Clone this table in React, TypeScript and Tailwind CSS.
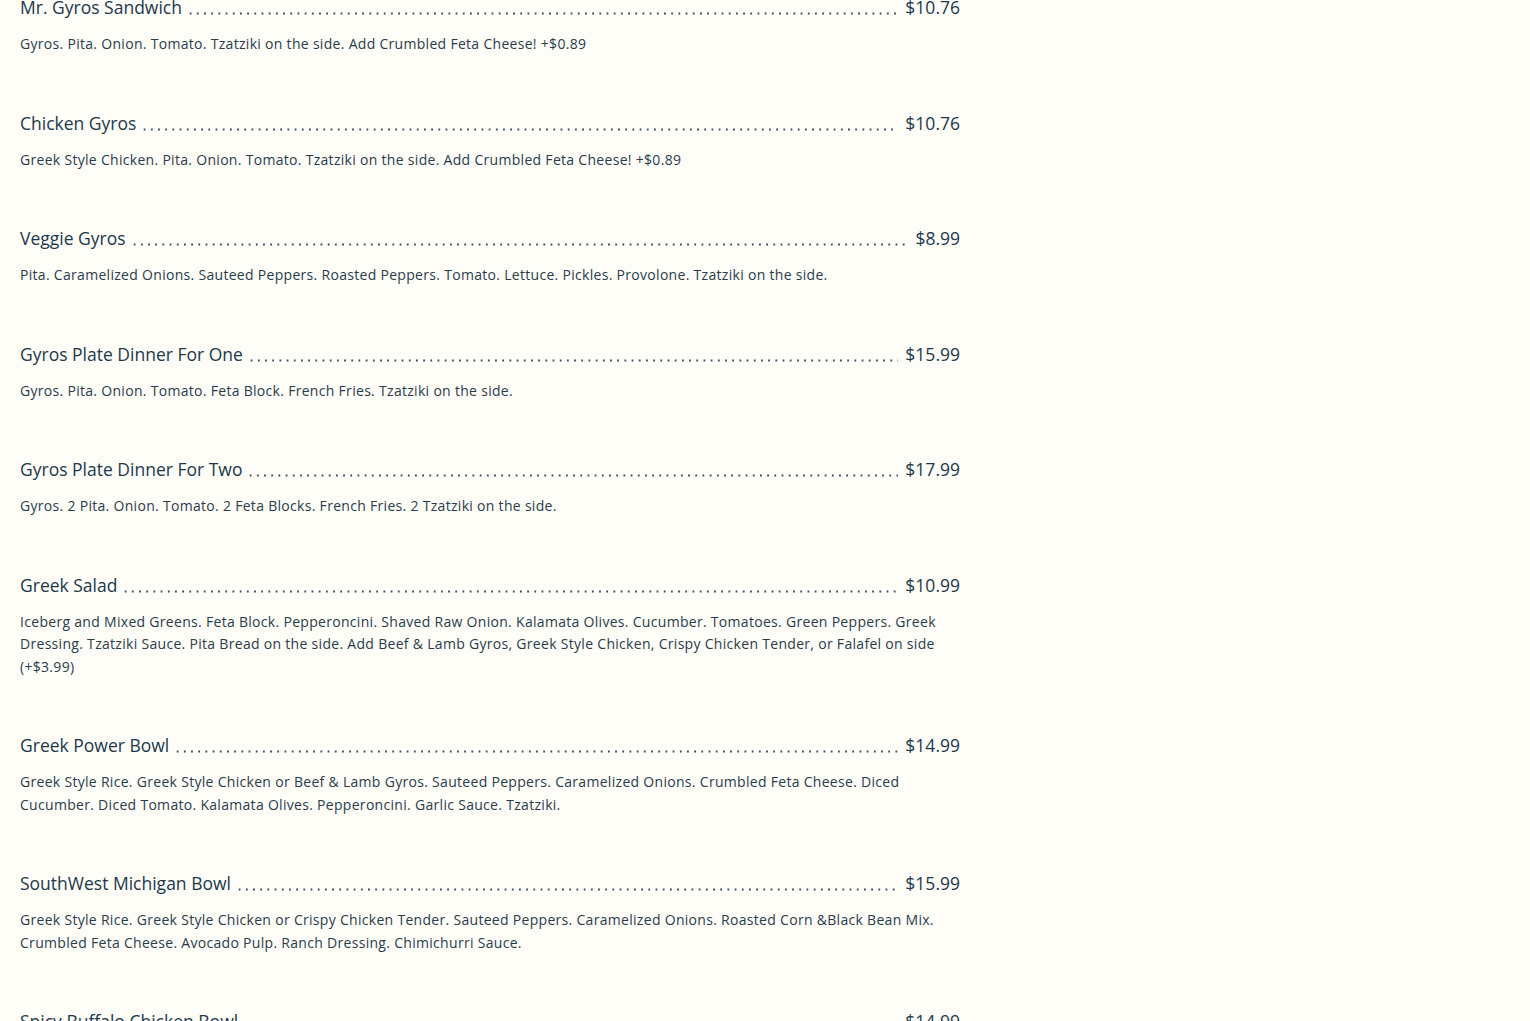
import React from "react";

type Item = { name: string; price: string; desc: string };

const items: Item[] = [
  {
    name: "Mr. Gyros Sandwich",
    price: "$10.76",
    desc: "Gyros. Pita. Onion. Tomato. Tzatziki on the side. Add Crumbled Feta Cheese! +$0.89",
  },
  {
    name: "Chicken Gyros",
    price: "$10.76",
    desc: "Greek Style Chicken. Pita. Onion. Tomato. Tzatziki on the side. Add Crumbled Feta Cheese! +$0.89",
  },
  {
    name: "Veggie Gyros",
    price: "$8.99",
    desc: "Pita. Caramelized Onions. Sauteed Peppers. Roasted Peppers. Tomato. Lettuce. Pickles. Provolone. Tzatziki on the side.",
  },
  {
    name: "Gyros Plate Dinner For One",
    price: "$15.99",
    desc: "Gyros. Pita. Onion. Tomato. Feta Block. French Fries. Tzatziki on the side.",
  },
  {
    name: "Gyros Plate Dinner For Two",
    price: "$17.99",
    desc: "Gyros. 2 Pita. Onion. Tomato. 2 Feta Blocks. French Fries. 2 Tzatziki on the side.",
  },
  {
    name: "Greek Salad",
    price: "$10.99",
    desc: "Iceberg and Mixed Greens. Feta Block. Pepperoncini. Shaved Raw Onion. Kalamata Olives. Cucumber. Tomatoes. Green Peppers. Greek Dressing. Tzatziki Sauce. Pita Bread on the side. Add Beef & Lamb Gyros, Greek Style Chicken, Crispy Chicken Tender, or Falafel on side (+$3.99)",
  },
  {
    name: "Greek Power Bowl",
    price: "$14.99",
    desc: "Greek Style Rice. Greek Style Chicken or Beef & Lamb Gyros. Sauteed Peppers. Caramelized Onions. Crumbled Feta Cheese. Diced Cucumber. Diced Tomato. Kalamata Olives. Pepperoncini. Garlic Sauce. Tzatziki.",
  },
  {
    name: "SouthWest Michigan Bowl",
    price: "$15.99",
    desc: "Greek Style Rice. Greek Style Chicken or Crispy Chicken Tender. Sauteed Peppers. Caramelized Onions. Roasted Corn &Black Bean Mix. Crumbled Feta Cheese. Avocado Pulp. Ranch Dressing. Chimichurri Sauce.",
  },
  {
    name: "Spicy Buffalo Chicken Bowl",
    price: "$14.99",
    desc: "Greek Style Rice. Crispy Chicken Tender. Buffalo Sauce. Sauteed Peppers. Caramelized Onions. Crumbled Feta Cheese. Ranch Dressing.",
  },
];

function MenuItem({ item }: { item: Item }) {
  return (
    <div className="flex flex-col">
      <div className="flex items-end h-[27px] text-[17.5px] leading-[27px] text-[#22384a]">
        <span className="whitespace-nowrap">{item.name}</span>
        <span className="flex-1 ml-[5px] mr-[7px] mb-[6px] h-[3px] bg-[radial-gradient(circle,#3e5060_0.9px,transparent_1.3px)] bg-[length:7.2px_3px] bg-repeat-x" />
        <span className="whitespace-nowrap">{item.price}</span>
      </div>
      <p className="mt-[12px] text-[14px] tracking-[0.3px] leading-[22.5px] text-[#2a3c4a]">{item.desc}</p>
    </div>
  );
}

export default function App() {
  return (
    <div className="min-h-screen bg-[#fefdf8] overflow-hidden" style={{ fontFamily: '"Open Sans", "Liberation Sans", sans-serif' }}>
      <div className="w-[940px] ml-5 -mt-[6px] flex flex-col gap-[54px]">
        {items.map((it) => (
          <MenuItem key={it.name} item={it} />
        ))}
      </div>
    </div>
  );
}
